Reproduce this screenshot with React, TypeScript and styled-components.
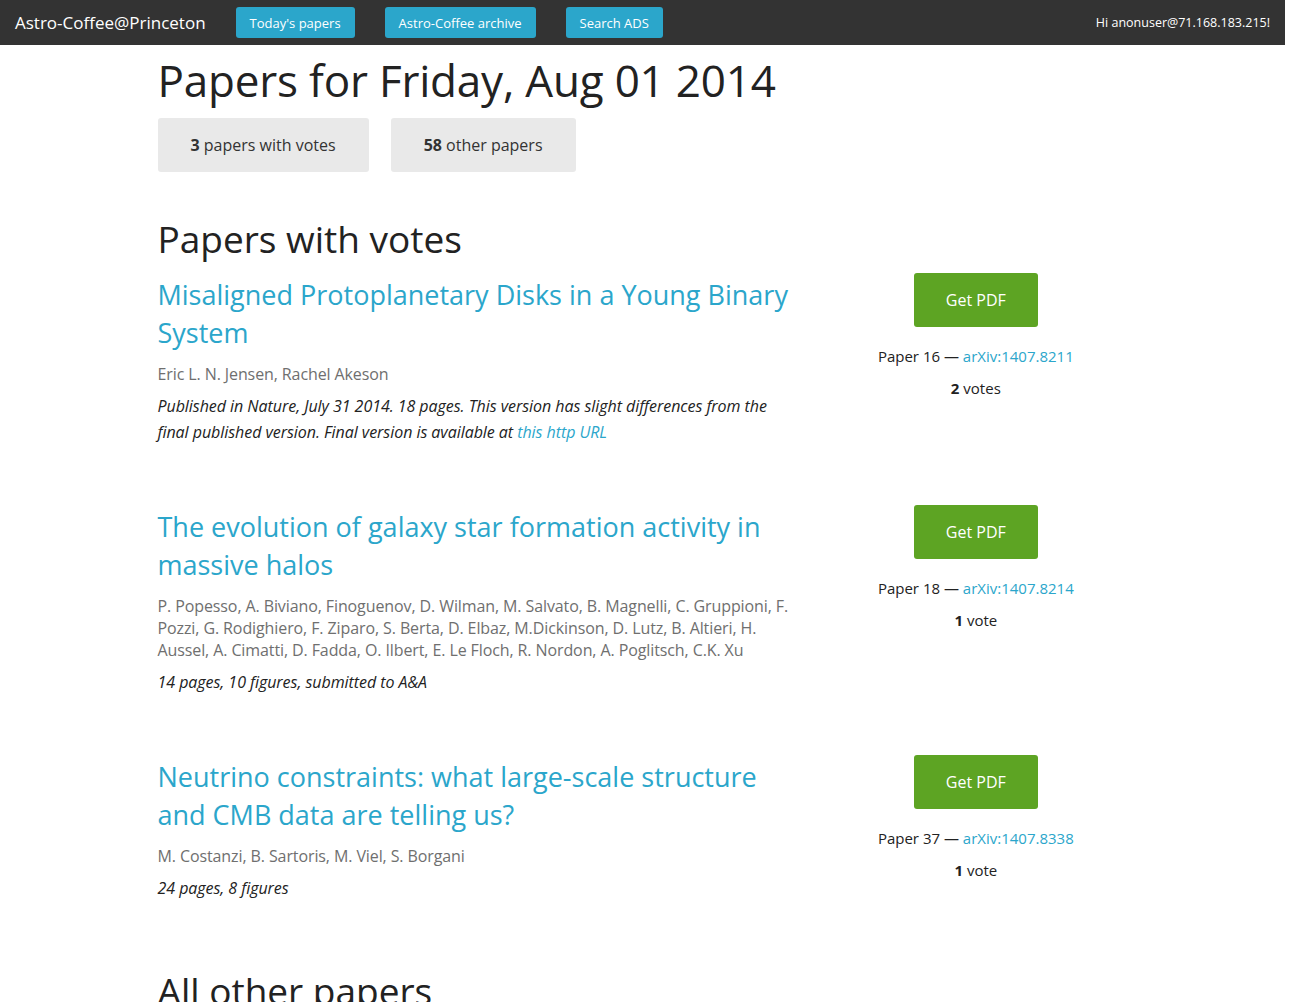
import React from "react";
import styled, { createGlobalStyle } from "styled-components";

const GlobalStyle = createGlobalStyle`
  html, body { margin: 0; padding: 0; background: #fff; }
  body { font-family: "Open Sans", "DejaVu Sans", sans-serif; color: #222; }
  * { box-sizing: border-box; }
`;

const Page = styled.div`
  width: calc(100% - 13px);
`;

const TopBar = styled.nav`
  height: 45px;
  background: #333;
  display: flex;
  align-items: center;
  padding: 0 15px;
`;

const Brand = styled.a`
  color: #fff;
  font-size: 17px;
  text-decoration: none;
  margin-right: 30px;
`;

const NavLinks = styled.div`
  display: flex;
  gap: 30px;
  flex: 1;
`;

const NavButton = styled.a`
  display: inline-flex;
  align-items: center;
  height: 31px;
  padding: 0 14px;
  background: #2ba6cb;
  color: #fff;
  font-size: 13px;
  border-radius: 3px;
  text-decoration: none;
`;

const Greeting = styled.span`
  color: #fff;
  font-size: 12.5px;
`;

const Row = styled.div`
  max-width: 1000px;
  margin: 0 auto;
  display: flex;
`;

const Column = styled.div<{ $span: number }>`
  width: ${(p) => (p.$span / 12) * 100}%;
  padding: 0 15px;
`;

const PageTitle = styled.h1`
  font-size: 44px;
  font-weight: 400;
  line-height: 1.4;
  letter-spacing: -0.2px;
  margin: 5px 0 6px;
  color: #222;
`;

const StatGroup = styled.div`
  display: flex;
  gap: 22px;
`;

const StatButton = styled.a`
  display: inline-block;
  padding: 16px 33px;
  line-height: 22px;
  font-size: 16px;
  background: #e9e9e9;
  color: #333;
  border-radius: 3px;
  text-decoration: none;
  b { font-weight: 700; }
`;

const SectionTitle = styled.h2<{ $top: number }>`
  font-size: 37px;
  font-weight: 400;
  line-height: 1.4;
  margin: ${(p) => p.$top}px 0 9px;
  color: #222;
`;

const PaperRow = styled(Row)`
  margin-bottom: 60px;
`;

const PaperTitle = styled.a`
  display: block;
  margin-top: 3px;
  font-size: 27px;
  line-height: 38px;
  color: #2ba6cb;
  text-decoration: none;
`;

const Authors = styled.div`
  margin-top: 11px;
  font-size: 16px;
  line-height: 22px;
  letter-spacing: -0.1px;
  color: #6f6f6f;
`;

const Comments = styled.div`
  margin-top: 8px;
  font-size: 16px;
  line-height: 26px;
  letter-spacing: -0.05px;
  font-style: italic;
  color: #222;
  a { color: #2ba6cb; text-decoration: none; }
`;

const Side = styled.div`
  display: flex;
  flex-direction: column;
  align-items: center;
`;

const PdfButton = styled.a`
  display: inline-block;
  padding: 16px 32px;
  line-height: 22px;
  font-size: 16px;
  background: #5da423;
  color: #fff;
  border-radius: 3px;
  text-decoration: none;
`;

const Info = styled.div`
  margin-top: 18px;
  font-size: 15px;
  line-height: 22px;
  color: #222;
  text-align: center;
  a { color: #2ba6cb; text-decoration: none; }
`;

const Votes = styled.div`
  margin-top: 10px;
  font-size: 15px;
  line-height: 22px;
  color: #222;
  b { font-weight: 700; }
`;

type Paper = {
  title: string;
  authors: string;
  comments: React.ReactNode;
  num: number;
  arxiv: string;
  votes: number;
};

const papers: Paper[] = [
  {
    title: "Misaligned Protoplanetary Disks in a Young Binary System",
    authors: "Eric L. N. Jensen, Rachel Akeson",
    comments: (
      <>
        Published in Nature, July 31 2014. 18 pages. This version has slight differences from the
        final published version. Final version is available at <a href="#">this http URL</a>
      </>
    ),
    num: 16,
    arxiv: "1407.8211",
    votes: 2,
  },
  {
    title: "The evolution of galaxy star formation activity in massive halos",
    authors:
      "P. Popesso, A. Biviano, Finoguenov, D. Wilman, M. Salvato, B. Magnelli, C. Gruppioni, F. Pozzi, G. Rodighiero, F. Ziparo, S. Berta, D. Elbaz, M.Dickinson, D. Lutz, B. Altieri, H. Aussel, A. Cimatti, D. Fadda, O. Ilbert, E. Le Floch, R. Nordon, A. Poglitsch, C.K. Xu",
    comments: "14 pages, 10 figures, submitted to A&A",
    num: 18,
    arxiv: "1407.8214",
    votes: 1,
  },
  {
    title: "Neutrino constraints: what large-scale structure and CMB data are telling us?",
    authors: "M. Costanzi, B. Sartoris, M. Viel, S. Borgani",
    comments: "24 pages, 8 figures",
    num: 37,
    arxiv: "1407.8338",
    votes: 1,
  },
];

export default function App() {
  return (
    <Page>
      <GlobalStyle />
      <TopBar>
        <Brand href="#">Astro-Coffee@Princeton</Brand>
        <NavLinks>
          <NavButton href="#">Today's papers</NavButton>
          <NavButton href="#">Astro-Coffee archive</NavButton>
          <NavButton href="#">Search ADS</NavButton>
        </NavLinks>
        <Greeting>Hi anonuser@71.168.183.215!</Greeting>
      </TopBar>
      <Row>
        <Column $span={12}>
          <PageTitle>Papers for Friday, Aug 01 2014</PageTitle>
          <StatGroup>
            <StatButton href="#">
              <b>3</b> papers with votes
            </StatButton>
            <StatButton href="#">
              <b>58</b> other papers
            </StatButton>
          </StatGroup>
          <SectionTitle $top={41}>Papers with votes</SectionTitle>
        </Column>
      </Row>
      {papers.map((p) => (
        <PaperRow key={p.num}>
          <Column $span={8}>
            <PaperTitle href="#">{p.title}</PaperTitle>
            <Authors>{p.authors}</Authors>
            <Comments>{p.comments}</Comments>
          </Column>
          <Column $span={4}>
            <Side>
              <PdfButton href="#">Get PDF</PdfButton>
              <Info>
                Paper {p.num} — <a href="#">arXiv:{p.arxiv}</a>
              </Info>
              <Votes>
                <b>{p.votes}</b> {p.votes === 1 ? "vote" : "votes"}
              </Votes>
            </Side>
          </Column>
        </PaperRow>
      ))}
      <Row>
        <Column $span={12}>
          <SectionTitle $top={4}>All other papers</SectionTitle>
        </Column>
      </Row>
    </Page>
  );
}
